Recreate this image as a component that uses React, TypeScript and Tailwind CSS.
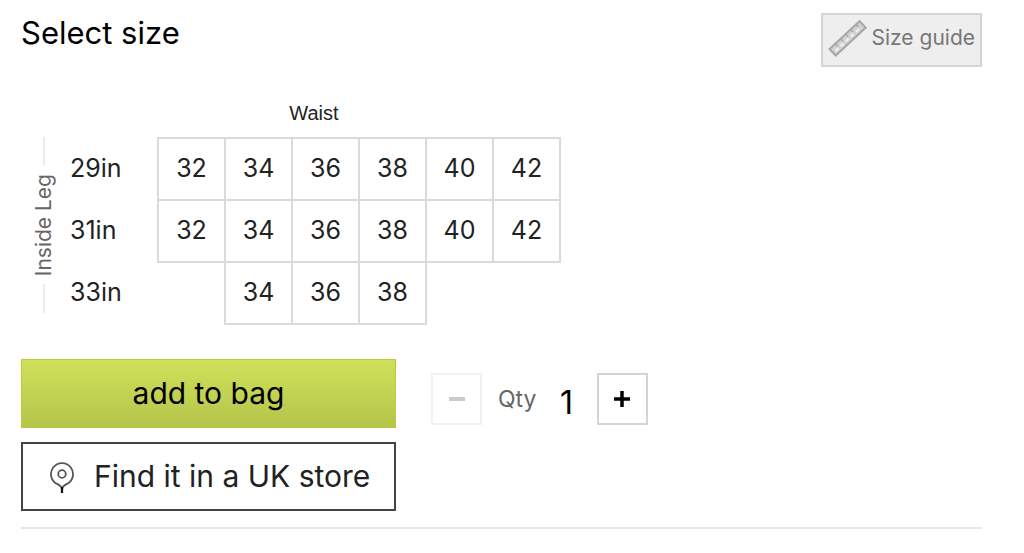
import { useState } from "react";

const rows = [
  { leg: "29in", sizes: [32, 34, 36, 38, 40, 42] },
  { leg: "31in", sizes: [32, 34, 36, 38, 40, 42] },
  { leg: "33in", sizes: [null, 34, 36, 38, null, null] },
];

function RulerIcon() {
  return (
    <svg className="h-10 w-10 shrink-0" viewBox="0 0 40 40" fill="none" aria-hidden="true">
      <g transform="rotate(-43 20 20)">
        <rect x="-1" y="15.5" width="41" height="9" fill="#d2d2d2" stroke="#a6a6a6" strokeWidth="2" />
        <path d="M7 15v4M14 15v4M21 15v4M28 15v4M35 15v4" stroke="#a6a6a6" strokeWidth="1.5" />
        <path d="M2 21h4M9 21h4M16 21h4M23 21h4M30 21h4" stroke="#efefef" strokeWidth="2.5" />
      </g>
    </svg>
  );
}

function PinIcon() {
  return (
    <svg className="h-8 w-6 shrink-0" viewBox="0 0 24 32" fill="none" stroke="#555" strokeWidth="1.8" aria-hidden="true">
      <path d="M12 31c0-4.500-.8-5.800-4-7.600A11 11 0 1 1 16 23.400c-3.200 1.800-4 3.100-4 7.600z" />
      <circle cx="12" cy="13" r="3.800" />
      <path d="M12 26v6" strokeWidth="2.2" stroke="#111" />
    </svg>
  );
}

export default function App() {
  const [selected, setSelected] = useState("");
  const [qty, setQty] = useState(1);

  return (
    <main className="bg-white pt-[13px] pr-[42px] pb-6 pl-[21px] font-['Inter',sans-serif] text-[#222]">
      <header className="flex items-start justify-between">
        <h1 className="text-[31px] leading-10 text-black">Select size</h1>
        <button
          type="button"
          className="flex h-[54px] items-center gap-1 border-2 border-[#d4d4d4] bg-[#eeeeee] px-[5px] pb-1 text-[21px] text-[#777]"
        >
          <RulerIcon />
          Size guide
        </button>
      </header>

      <section className="mt-[34px] flex items-end">
        <div className="mb-3 flex h-[176px] w-[46px] flex-col items-center gap-2">
          <span className="w-[2px] flex-1 bg-[#ececec]" />
          <span className="rotate-180 text-[21px] leading-6 text-[#666] [writing-mode:vertical-rl]">Inside Leg</span>
          <span className="w-[2px] flex-1 bg-[#ececec]" />
        </div>
        <table className="border-collapse">
          <caption className="pb-3 font-['Liberation_Sans',sans-serif] text-[20px] leading-6">Waist</caption>
          <tbody>
            {rows.map((row) => (
              <tr key={row.leg}>
                <th scope="row" className="h-[62px] w-[91px] p-0 pl-[3px] text-left text-[25px] font-normal">
                  {row.leg}
                </th>
                {row.sizes.map((size, i) =>
                  size ? (
                    <td key={i} className="h-[62px] w-[67px] border-2 border-[#dadada] p-0">
                      <button
                        type="button"
                        aria-pressed={selected === `${row.leg}-${size}`}
                        onClick={() => setSelected(`${row.leg}-${size}`)}
                        className="h-[60px] w-[65px] text-[25px] aria-pressed:bg-[#cfe05a]"
                      >
                        {size}
                      </button>
                    </td>
                  ) : (
                    <td key={i} />
                  ),
                )}
              </tr>
            ))}
          </tbody>
        </table>
      </section>

      <section className="mt-[34px] flex items-start gap-[35px] border-b-2 border-[#e6e6e6] pb-4">
        <div className="flex w-[375px] flex-col gap-[14px] text-[30px]">
          <button
            type="button"
            className="h-[69px] border border-[#b9cb3c] bg-linear-to-b from-[#cfe15a] to-[#b5c44a] text-black"
          >
            add to bag
          </button>
          <button
            type="button"
            className="flex h-[69px] items-center gap-5 border-2 border-[#444] pl-[27px] whitespace-nowrap"
          >
            <PinIcon />
            Find it in a UK store
          </button>
        </div>

        <div className="mt-[14px] flex items-center">
          <button
            type="button"
            aria-label="Decrease quantity"
            disabled={qty === 1}
            onClick={() => setQty(qty - 1)}
            className="flex h-[52px] w-[51px] items-center justify-center border-2 border-[#d4d4d4] disabled:opacity-30"
          >
            <svg className="h-4 w-4" viewBox="0 0 16 16" aria-hidden="true">
              <path d="M0 8h16" stroke="#555" strokeWidth="4" />
            </svg>
          </button>
          <label htmlFor="qty" className="ml-4 text-[23px] text-[#666]">
            Qty
          </label>
          <input
            id="qty"
            type="text"
            readOnly
            value={qty}
            className="mx-3 w-9 pt-2 text-center text-[32px] leading-10 text-black outline-none"
          />
          <button
            type="button"
            aria-label="Increase quantity"
            onClick={() => setQty(qty + 1)}
            className="flex h-[52px] w-[51px] items-center justify-center border-2 border-[#d4d4d4]"
          >
            <svg className="h-4 w-4" viewBox="0 0 16 16" aria-hidden="true">
              <path d="M0 8h16M8 0v16" stroke="#000" strokeWidth="3.500" />
            </svg>
          </button>
        </div>
      </section>
    </main>
  );
}
